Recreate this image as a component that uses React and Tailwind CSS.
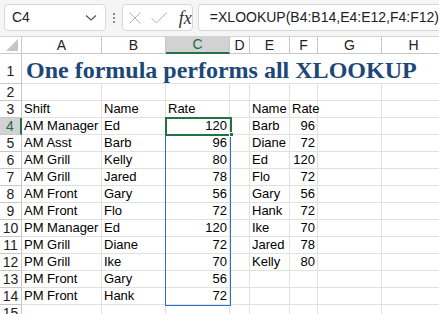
import React from "react";

const cols = [
  { k: "A", w: 80 },
  { k: "B", w: 64 },
  { k: "C", w: 64 },
  { k: "D", w: 20 },
  { k: "E", w: 40 },
  { k: "F", w: 28 },
  { k: "G", w: 64 },
  { k: "H", w: 64 },
];

const rows = [
  ["", "", "", "", "", "", "", ""],
  ["Shift", "Name", "Rate", "", "Name", "Rate", "", ""],
  ["AM Manager", "Ed", 120, "", "Barb", 96, "", ""],
  ["AM Asst", "Barb", 96, "", "Diane", 72, "", ""],
  ["AM Grill", "Kelly", 80, "", "Ed", 120, "", ""],
  ["AM Grill", "Jared", 78, "", "Flo", 72, "", ""],
  ["AM Front", "Gary", 56, "", "Gary", 56, "", ""],
  ["AM Front", "Flo", 72, "", "Hank", 72, "", ""],
  ["PM Manager", "Ed", 120, "", "Ike", 70, "", ""],
  ["PM Grill", "Diane", 72, "", "Jared", 78, "", ""],
  ["PM Grill", "Ike", 70, "", "Kelly", 80, "", ""],
  ["PM Front", "Gary", 56, "", "", "", "", ""],
  ["PM Front", "Hank", 72, "", "", "", "", ""],
  ["", "", "", "", "", "", "", ""],
];

function Cell({ v, w }) {
  const num = typeof v === "number";
  return (
    <div
      className={`h-full shrink-0 border-r border-b border-[#e1e1e1] flex items-center whitespace-nowrap text-black ${num ? "justify-end pr-[2px]" : "justify-start pl-[2px]"}`}
      style={{ width: w }}
    >
      {v === "" ? null : <span className="relative z-10">{v}</span>}
    </div>
  );
}

export default function App() {
  return (
    <div
      className="w-[439px] h-[314px] overflow-hidden bg-white text-[13px] relative"
      style={{ fontFamily: '"Liberation Sans", Arial, sans-serif' }}
    >
      {/* Toolbar */}
      <div className="h-[37px] bg-[#f5f5f5] flex items-start pt-[4px] border-b border-[#d4d4d4]">
        <div className="ml-[4px] w-[106px] h-[27px] bg-white border border-[#d8d8d8] rounded-[4px] flex items-center justify-between pl-[7px] pr-[8px]">
          <span className="text-[14px] text-[#222]">C4</span>
          <svg width="12" height="8" viewBox="0 0 12 8">
            <path d="M1 1.5 L6 6 L11 1.5" fill="none" stroke="#555" strokeWidth="1.2" />
          </svg>
        </div>
        <div className="w-[17px] h-[27px] flex flex-col items-center justify-center gap-[2px]">
          <div className="w-[2px] h-[2px] bg-[#8a8a8a]" />
          <div className="w-[2px] h-[2px] bg-[#8a8a8a]" />
          <div className="w-[2px] h-[2px] bg-[#8a8a8a]" />
        </div>
        <div className="w-[73px] h-[27px] bg-white border border-[#d8d8d8] rounded-[4px] flex items-center pl-[5px]">
          <svg width="12" height="12" viewBox="0 0 12 12" className="ml-[1px] shrink-0">
            <path d="M0.5 0.5 L11.5 11.5 M11.5 0.5 L0.5 11.5" stroke="#b5b5b5" strokeWidth="1" fill="none" />
          </svg>
          <svg width="16" height="12" viewBox="0 0 16 12" className="ml-[10px] shrink-0">
            <path d="M0.5 6 L5.5 11 L15.5 0.5" stroke="#b5b5b5" strokeWidth="1" fill="none" />
          </svg>
          <span
            className="ml-[12px] text-[18px] italic text-[#333] leading-none"
            style={{ fontFamily: '"Liberation Serif", "Times New Roman", serif' }}
          >
            fx
          </span>
        </div>
        <div className="ml-[5px] flex-1 h-[27px] bg-white border border-[#d8d8d8] border-r-0 rounded-l-[4px] flex items-center pl-[11px] text-[14px] text-[#222] whitespace-nowrap">
          =XLOOKUP(B4:B14,E4:E12,F4:F12)
        </div>
      </div>

      {/* Column headers */}
      <div className="h-[17px] flex bg-white">
        <div className="w-[22px] shrink-0 h-full border-r border-b border-[#c8c8c8] relative">
          <svg width="12" height="12" viewBox="0 0 12 12" className="absolute right-[3px] bottom-[2px]">
            <path d="M12 0 L12 12 L0 12 Z" fill="#c6c6c6" />
          </svg>
        </div>
        {cols.map((c) =>
          c.k === "C" ? (
            <div
              key={c.k}
              className="h-full shrink-0 bg-[#d2d2d2] border-r border-[#c8c8c8] border-b-2 border-b-[#217346] flex items-center justify-center text-[#1d6b40] text-[14px]"
              style={{ width: c.w }}
            >
              {c.k}
            </div>
          ) : (
            <div
              key={c.k}
              className="h-full shrink-0 border-r border-b border-[#c8c8c8] flex items-center justify-center text-[#222] text-[14px]"
              style={{ width: c.w }}
            >
              {c.k}
            </div>
          )
        )}
      </div>

      {/* Row 1 with title */}
      <div className="h-[30px] flex">
        <div className="w-[22px] shrink-0 h-full border-r border-b border-[#c8c8c8] flex items-end justify-center pb-[1px] text-[14px] text-[#222]">
          1
        </div>
        <div className="flex-1 h-full border-b border-[#e1e1e1] flex items-end pl-[4px] whitespace-nowrap">
          <span
            className="text-[24px] font-bold text-[#1b4878] leading-none pb-[1px]"
            style={{ fontFamily: '"Liberation Serif", "Times New Roman", serif' }}
          >
            One formula performs all XLOOKUP
          </span>
        </div>
      </div>

      {/* Rows 2-15 */}
      {rows.map((r, i) => {
        const n = i + 2;
        const sel = n === 4;
        return (
          <div key={n} className="h-[17px] flex">
            <div
              className={`w-[22px] shrink-0 h-full border-b flex items-center justify-center text-[14px] ${
                sel
                  ? "bg-[#d2d2d2] border-r-2 border-r-[#217346] border-b-[#c8c8c8] text-[#1d6b40]"
                  : "border-r border-[#c8c8c8] text-[#222]"
              }`}
            >
              {n}
            </div>
            {r.map((v, j) => (
              <Cell key={j} v={v} w={cols[j].w} />
            ))}
          </div>
        );
      })}

      {/* Spill range border C4:C14 */}
      <div className="absolute left-[165px] top-[118px] w-[66px] h-[188px] border border-[#2f6fd0] pointer-events-none z-20" />
      {/* Active cell C4 */}
      <div className="absolute left-[165px] top-[117px] w-[67px] h-[19px] border-2 border-[#217346] pointer-events-none z-20" />
      <div className="absolute left-[229px] top-[132px] w-[5px] h-[5px] bg-[#217346] border border-white pointer-events-none z-20" />
    </div>
  );
}
